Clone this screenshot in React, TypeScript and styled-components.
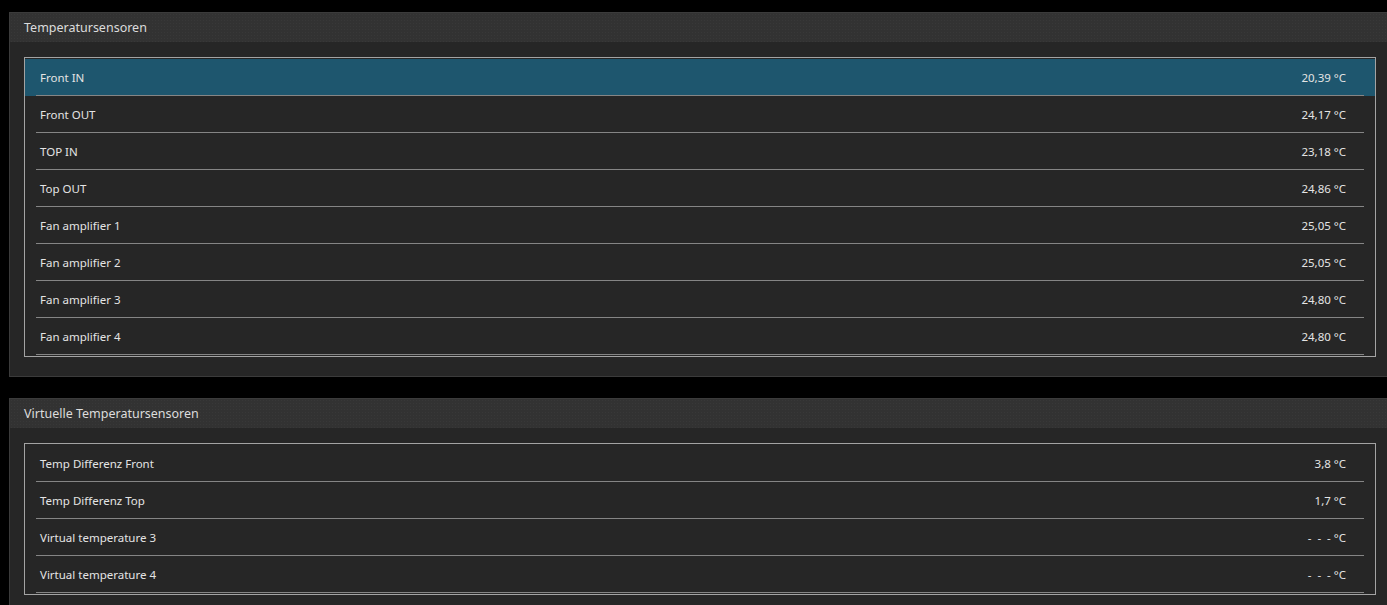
import React from 'react';
import styled, { createGlobalStyle } from 'styled-components';

interface Sensor {
  id: string;
  label: string;
  value: string;
}

interface SensorGroup {
  id: string;
  title: string;
  sensors: Sensor[];
}

const groups: SensorGroup[] = [
  {
    id: 'physical',
    title: 'Temperatursensoren',
    sensors: [
      { id: 's1', label: 'Front IN', value: '20,39 °C' },
      { id: 's2', label: 'Front OUT', value: '24,17 °C' },
      { id: 's3', label: 'TOP IN', value: '23,18 °C' },
      { id: 's4', label: 'Top OUT', value: '24,86 °C' },
      { id: 's5', label: 'Fan amplifier 1', value: '25,05 °C' },
      { id: 's6', label: 'Fan amplifier 2', value: '25,05 °C' },
      { id: 's7', label: 'Fan amplifier 3', value: '24,80 °C' },
      { id: 's8', label: 'Fan amplifier 4', value: '24,80 °C' }
    ]
  },
  {
    id: 'virtual',
    title: 'Virtuelle Temperatursensoren',
    sensors: [
      { id: 'v1', label: 'Temp Differenz Front', value: '3,8 °C' },
      { id: 'v2', label: 'Temp Differenz Top', value: '1,7 °C' },
      { id: 'v3', label: 'Virtual temperature 3', value: '-\u00a0\u00a0-\u00a0\u00a0-\u00a0°C' },
      { id: 'v4', label: 'Virtual temperature 4', value: '-\u00a0\u00a0-\u00a0\u00a0-\u00a0°C' }
    ]
  }
];

const App: React.FC = () => {
  const [selected, setSelected] = React.useState('s1');

  return (
    <>
      <GlobalStyle />
      <Page>
        {groups.map((group) => (
          <Panel key={group.id}>
            <PanelHeader>{group.title}</PanelHeader>
            <PanelBody>
              <SensorList>
                {group.sensors.map((sensor) => (
                  <SensorRow
                    key={sensor.id}
                    $active={selected === sensor.id}
                    onClick={() => setSelected(sensor.id)}
                  >
                    <SensorLabel>{sensor.label}</SensorLabel>
                    <SensorValue>{sensor.value}</SensorValue>
                  </SensorRow>
                ))}
              </SensorList>
            </PanelBody>
          </Panel>
        ))}
      </Page>
    </>
  );
};

// Styled Components
const GlobalStyle = createGlobalStyle`
  html, body {
    margin: 0;
    padding: 0;
    background-color: #000;
    overflow: hidden;
  }

  body {
    font-family: "Noto Sans", "Open Sans", sans-serif;
    color: #e2e2e2;
  }
`;

const Page = styled.div`
  display: flex;
  flex-direction: column;
  gap: 21px;
  width: 1382px;
  padding: 12px 0 0 9px;
`;

const Panel = styled.section`
  display: flex;
  flex-direction: column;
  background-color: #262626;
  border: 1px solid #3b3b3b;
`;

const PanelHeader = styled.div`
  height: 29px;
  display: flex;
  align-items: center;
  padding: 0 14px;
  font-size: 12.5px;
  color: #dcdcdc;
  background-color: #323232;
  background-image: radial-gradient(#383838 0.6px, transparent 0.7px);
  background-size: 3px 3px;
`;

const PanelBody = styled.div`
  padding: 15px 14px 19px;
`;

const SensorList = styled.div`
  display: flex;
  flex-direction: column;
  border: 1px solid #a3a3a3;
  padding: 1px 0;
`;

const SensorRow = styled.div<{ $active: boolean }>`
  position: relative;
  height: 37px;
  display: flex;
  align-items: center;
  justify-content: space-between;
  padding: 0 29px 0 15px;
  font-size: 11.5px;
  color: #e4e4e4;
  background-color: ${(p) => (p.$active ? '#1e566e' : 'transparent')};
  cursor: pointer;

  &::after {
    content: '';
    position: absolute;
    left: 11px;
    right: 11px;
    bottom: 0;
    height: 1px;
    background-color: #858585;
  }
`;

const SensorLabel = styled.span`
  white-space: nowrap;
`;

const SensorValue = styled.span`
  white-space: nowrap;
  text-align: right;
`;

export default App;
